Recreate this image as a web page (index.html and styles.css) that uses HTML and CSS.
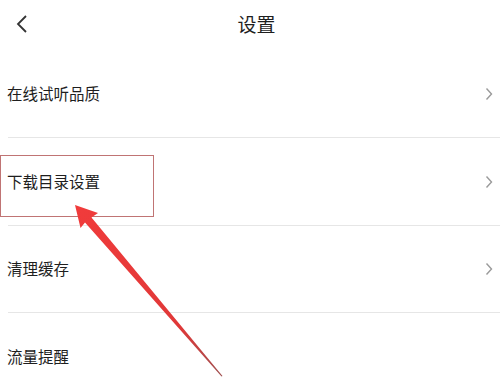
FILE: index.html
```html
<!DOCTYPE html>
<html lang="zh">
<head>
<meta charset="utf-8">
<link rel="stylesheet" href="styles.css">
</head>
<body>
<div class="page">
  <header class="topbar">
    <svg class="back" width="14" height="20" viewBox="0 0 14 20"><path d="M11 2 L3 10 L11 18" fill="none" stroke="#333" stroke-width="1.8"/></svg>
    <h1 class="title">设置</h1>
  </header>
  <ul class="list">
    <li class="row"><span class="label">在线试听品质</span><svg class="chev" width="8" height="14" viewBox="0 0 8 14"><path d="M1.5 1.5 L6.5 7 L1.5 12.5" fill="none" stroke="#9a9a9a" stroke-width="1.4"/></svg></li>
    <li class="row"><span class="label">下载目录设置</span><svg class="chev" width="8" height="14" viewBox="0 0 8 14"><path d="M1.5 1.5 L6.5 7 L1.5 12.5" fill="none" stroke="#9a9a9a" stroke-width="1.4"/></svg></li>
    <li class="row"><span class="label">清理缓存</span><svg class="chev" width="8" height="14" viewBox="0 0 8 14"><path d="M1.5 1.5 L6.5 7 L1.5 12.5" fill="none" stroke="#9a9a9a" stroke-width="1.4"/></svg></li>
    <li class="row"><span class="label">流量提醒</span></li>
  </ul>
  <div class="highlight"></div>
  <svg class="arrow" width="500" height="387" viewBox="0 0 500 387">
    <defs>
      <linearGradient id="g" x1="80" y1="210" x2="222" y2="376" gradientUnits="userSpaceOnUse">
        <stop offset="0" stop-color="#f03b3b"/>
        <stop offset="0.7" stop-color="#e03838"/>
        <stop offset="1" stop-color="#a05050"/>
      </linearGradient>
    </defs>
    <polygon points="75,205 98,213 91.5,217.5 222.5,376 221.5,376.5 85,222.5 80.5,228" fill="url(#g)"/>
  </svg>
</div>
</body>
</html>
```
FILE: styles.css
```css
* { box-sizing: border-box; }
html, body { margin: 0; padding: 0; background: #fff; }
body {
  font-family: "Noto Sans CJK SC", "Noto Sans", sans-serif;
  color: #222;
}
.page {
  position: relative;
  width: 500px;
  height: 387px;
  overflow: hidden;
}
.topbar {
  height: 50px;
  display: flex;
  align-items: center;
  justify-content: center;
  position: relative;
}
.back {
  position: absolute;
  left: 15px;
  top: 14px;
}
.title {
  margin: 0 0 3px 13px;
  font-size: 19px;
  font-weight: 400;
  color: #1e1e1e;
  line-height: 1;
}
.list {
  list-style: none;
  margin: 0;
  padding: 0 0 0 8px;
}
.row {
  height: 88px;
  display: flex;
  align-items: center;
  justify-content: space-between;
  padding-right: 7px;
  border-bottom: 1px solid #e6e6e6;
}
.row:nth-child(3) { height: 87px; }
.label {
  margin-left: -1px;
  font-size: 15.5px;
  font-weight: 400;
  color: #1e1e1e;
  line-height: 1;
}
.chev { flex: none; }
.highlight {
  position: absolute;
  left: 0;
  top: 155px;
  width: 154px;
  height: 62px;
  border: 1px solid #c07474;
}
.arrow {
  position: absolute;
  left: 0;
  top: 0;
}
```
